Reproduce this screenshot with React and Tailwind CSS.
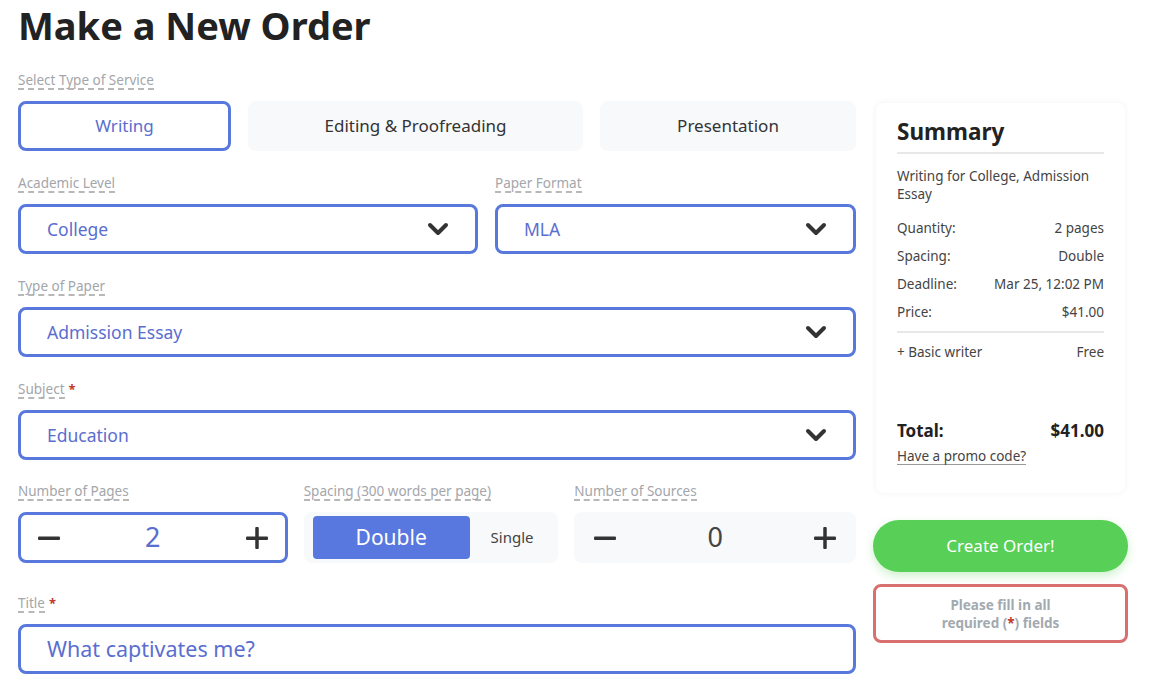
import React from 'react';

const font = { fontFamily: '"Noto Sans", Lato, sans-serif' };

function Label({ children, required }) {
    return (
        <div className="flex h-[29px] items-start">
            <span className="block border-b-2 border-dashed border-[#b8b8b8] text-[13.5px] leading-[16px] text-[#a3a6ab]">
                {children}
            </span>
            {required && <span className="ml-1 text-[13px] font-bold leading-[16px] text-[#c0392b]">*</span>}
        </div>
    );
}

function Chevron() {
    return (
        <svg width="22" height="14" viewBox="0 0 22 14" fill="none">
            <polyline points="3,3 11,11 19,3" stroke="#333" strokeWidth="4" strokeLinecap="round" strokeLinejoin="round" />
        </svg>
    );
}

function Select({ value }) {
    return (
        <div className="flex h-[50px] items-center justify-between rounded-lg border-[3px] border-[#5878dc] bg-white px-[26px]">
            <span className="text-[17.5px] text-[#5a6ecf]">{value}</span>
            <Chevron />
        </div>
    );
}

function Minus() {
    return (
        <svg width="24" height="24" viewBox="0 0 24 24">
            <rect x="1" y="10.5" width="22" height="3.5" rx="1" fill="#333" />
        </svg>
    );
}

function Plus() {
    return (
        <svg width="24" height="24" viewBox="0 0 24 24">
            <rect x="1" y="10.5" width="22" height="3.5" rx="1" fill="#333" />
            <rect x="10.25" y="1" width="3.5" height="22" rx="1" fill="#333" />
        </svg>
    );
}

function Row({ left, right }) {
    return (
        <div className="flex h-[28px] items-center justify-between text-[13.5px] text-[#444]">
            <span>{left}</span>
            <span>{right}</span>
        </div>
    );
}

export default function App() {
    return (
        <div className="min-h-screen bg-white px-[18px]" style={font}>
            {/* Heading */}
            <div className="h-[72px] pt-[2px]">
                <h1 className="text-[38px] font-bold leading-[46px] text-[#222]">Make a New Order</h1>
            </div>

            <div className="flex gap-[17px]">
                {/* Left column - form */}
                <div className="w-[838px]">
                    <Label>Select Type of Service</Label>
                    <div className="flex gap-[17px]">
                        <div className="flex h-[50px] w-[213px] items-center justify-center rounded-lg border-[3px] border-[#5878dc] bg-white text-[17px] text-[#5a6ecf]">
                            Writing
                        </div>
                        <div className="flex h-[50px] w-[335px] items-center justify-center rounded-lg bg-[#f7f9fb] text-[17px] text-[#333]">
                            Editing &amp; Proofreading
                        </div>
                        <div className="flex h-[50px] w-[256px] items-center justify-center rounded-lg bg-[#f7f9fb] text-[17px] text-[#333]">
                            Presentation
                        </div>
                    </div>

                    <div className="mt-[24px] flex gap-[17px]">
                        <div className="w-[460px]">
                            <Label>Academic Level</Label>
                            <Select value="College" />
                        </div>
                        <div className="w-[361px]">
                            <Label>Paper Format</Label>
                            <Select value="MLA" />
                        </div>
                    </div>

                    <div className="mt-[24px]">
                        <Label>Type of Paper</Label>
                        <Select value="Admission Essay" />
                    </div>

                    <div className="mt-[24px]">
                        <Label required>Subject</Label>
                        <Select value="Education" />
                    </div>

                    <div className="mt-[23px] flex gap-[16px]">
                        <div className="w-[270px]">
                            <Label>Number of Pages</Label>
                            <div className="flex h-[51px] items-center justify-between rounded-lg border-[3px] border-[#5878dc] bg-white px-[16px]">
                                <Minus />
                                <span className="text-[27px] text-[#5a6ecf]">2</span>
                                <Plus />
                            </div>
                        </div>
                        <div className="w-[255px]">
                            <Label>Spacing (300 words per page)</Label>
                            <div className="flex h-[51px] items-center rounded-lg bg-[#f7f9fb] p-[4px] pl-[9px]">
                                <div className="flex h-[43px] w-[157px] items-center justify-center rounded bg-[#5878e0] text-[21px] text-white">
                                    Double
                                </div>
                                <div className="flex flex-1 items-center justify-center text-[15px] text-[#444]">Single</div>
                            </div>
                        </div>
                        <div className="w-[282px]">
                            <Label>Number of Sources</Label>
                            <div className="flex h-[51px] items-center justify-between rounded-lg bg-[#f7f9fb] px-[19px]">
                                <Minus />
                                <span className="text-[27px] text-[#444]">0</span>
                                <Plus />
                            </div>
                        </div>
                    </div>

                    <div className="mt-[32px]">
                        <Label required>Title</Label>
                        <div className="flex h-[50px] items-center rounded-lg border-[3px] border-[#5878dc] bg-white pl-[26px]">
                            <span className="text-[21.5px] text-[#5a6ecf]">What captivates me?</span>
                        </div>
                    </div>
                </div>

                {/* Right column - summary */}
                <div className="mt-[31px] w-[255px]">
                    <div className="mx-[3px] flex h-[390px] flex-col rounded-lg bg-white px-[21px] pb-[26px] pt-[13px] shadow-[0_0_6px_rgba(0,0,0,0.06)]">
                        <h2 className="text-[22.5px] font-bold leading-[32px] text-[#222]">Summary</h2>
                        <div className="mt-[4px] h-[2px] bg-[#e6e8ea]" />
                        <p className="mt-[13px] text-[13.5px] leading-[18px] text-[#444]">Writing for College, Admission Essay</p>
                        <div className="mt-[11px]">
                            <Row left="Quantity:" right="2 pages" />
                            <Row left="Spacing:" right="Double" />
                            <Row left="Deadline:" right="Mar 25, 12:02 PM" />
                            <Row left="Price:" right="$41.00" />
                        </div>
                        <div className="mt-[5px] h-[2px] bg-[#e6e8ea]" />
                        <div className="mt-[5px]">
                            <Row left="+ Basic writer" right="Free" />
                        </div>
                        <div className="mt-auto">
                            <div className="flex items-center justify-between text-[17px] font-bold leading-[24px] text-[#222]">
                                <span>Total:</span>
                                <span>$41.00</span>
                            </div>
                            <span className="mt-[3px] inline-block border-b border-[#999] text-[13.5px] leading-[16px] text-[#444]">
                                Have a promo code?
                            </span>
                        </div>
                    </div>

                    <button className="mt-[27px] flex h-[52px] w-full items-center justify-center rounded-full bg-[#58cf57] text-[17px] text-white shadow-[0_4px_10px_rgba(88,207,87,0.3)]">
                        Create Order!
                    </button>

                    <div className="mt-[12px] flex h-[59px] flex-col items-center justify-center rounded-lg border-[3px] border-[#d8706f] bg-white text-center text-[13.5px] font-bold leading-[18px] text-[#a3a9b0]">
                        <span>Please fill in all</span>
                        <span>
                            required (<span className="text-[#c0392b]">*</span>) fields
                        </span>
                    </div>
                </div>
            </div>
        </div>
    );
}
